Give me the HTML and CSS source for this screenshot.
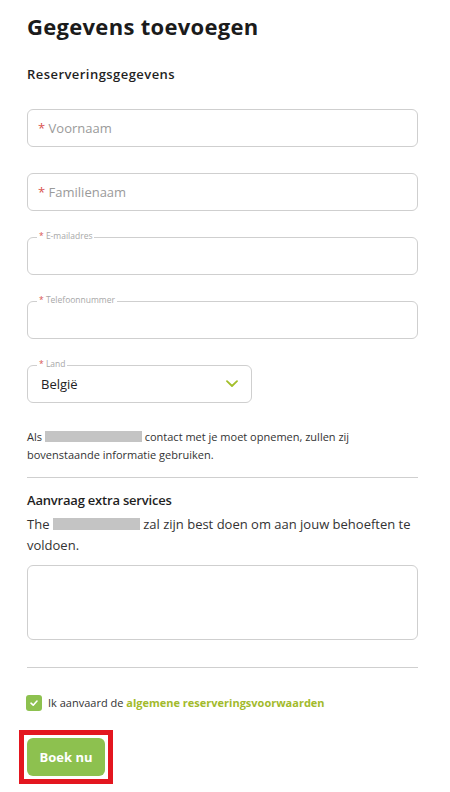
FILE: index.html
```html
<!DOCTYPE html>
<html lang="nl">
<head>
<meta charset="utf-8">
<title>Gegevens toevoegen</title>
<link rel="stylesheet" href="styles.css">
</head>
<body>
<main class="page">
  <h1 class="title">Gegevens toevoegen</h1>
  <h2 class="section-title first">Reserveringsgegevens</h2>

  <div class="fields">
    <div class="field">
      <div class="input"><span class="req">*</span>&nbsp;<span class="ph">Voornaam</span></div>
    </div>
    <div class="field">
      <div class="input"><span class="req">*</span>&nbsp;<span class="ph">Familienaam</span></div>
    </div>
    <div class="field floating">
      <span class="float-label"><span class="req">*</span> E-mailadres</span>
      <div class="input"></div>
    </div>
    <div class="field floating">
      <span class="float-label"><span class="req">*</span> Telefoonnummer</span>
      <div class="input"></div>
    </div>
    <div class="field floating select-field">
      <span class="float-label"><span class="req">*</span> Land</span>
      <div class="input select">
        <span class="value">België</span>
        <svg class="chev" width="12" height="8" viewBox="0 0 12 8"><path d="M1 1.2 L6 6 L11 1.2" fill="none" stroke="#a3bf2a" stroke-width="1.8" stroke-linecap="round" stroke-linejoin="round"/></svg>
      </div>
    </div>
  </div>

  <p class="note">Als <span class="redact r1"></span> contact met je moet opnemen, zullen zij bovenstaande informatie gebruiken.</p>

  <hr class="divider">

  <h2 class="section-title extra">Aanvraag extra services</h2>
  <p class="desc">The <span class="redact r2"></span> zal zijn best doen om aan jouw behoeften te voldoen.</p>
  <div class="textarea"></div>

  <hr class="divider second">

  <label class="terms">
    <span class="check">
      <svg width="10" height="8" viewBox="0 0 10 8"><path d="M2 4.2 L4.2 6.2 L8 2" fill="none" stroke="#fff" stroke-width="1.6" stroke-linecap="round" stroke-linejoin="round"/></svg>
    </span>
    <span class="terms-text">Ik aanvaard de <a class="link">algemene reserveringsvoorwaarden</a></span>
  </label>

  <div class="actions">
    <div class="highlight">
      <button class="btn">Boek nu</button>
    </div>
  </div>
</main>
</body>
</html>
```

FILE: styles.css
```css
* { box-sizing: border-box; }
html, body { margin: 0; padding: 0; background: #fff; }
body {
  font-family: "Open Sans", "DejaVu Sans", sans-serif;
  color: #222;
}
.page {
  width: 450px;
  padding: 10px 32px 0 27px;
}
.title {
  margin: 0;
  font-size: 22px;
  font-weight: 700;
  color: #1b1b1b;
  line-height: 32px;
  letter-spacing: 0.3px;
}
.section-title {
  margin: 0;
  font-size: 13px;
  font-weight: 600;
  color: #1f1f1f;
  line-height: 20px;
}
.section-title.first {
  margin-top: 22px;
  letter-spacing: 0.45px;
}
.fields {
  display: flex;
  flex-direction: column;
  gap: 26.5px;
  margin-top: 25px;
}
.field { position: relative; }
.input {
  height: 37.5px;
  border: 1px solid #cfcfcf;
  border-radius: 6px;
  display: flex;
  align-items: center;
  padding: 0 10px;
  font-size: 13px;
  background: #fff;
}
.req { color: #d9534f; }
.ph { color: #9a9a9a; }
.float-label {
  position: absolute;
  top: -6px;
  left: 10px;
  padding: 0 2px;
  background: #fff;
  font-size: 8.5px;
  line-height: 10px;
  color: #a8a8a8;
  z-index: 1;
}
.select-field { width: 225px; }
.select {
  justify-content: space-between;
  padding: 0 13px;
}
.select .value { color: #222; }
.chev { display: block; }
.note {
  margin: 25px 0 0;
  font-size: 11px;
  line-height: 18px;
  color: #333;
}
.redact {
  display: inline-block;
  background: #c4c4c4;
  height: 11px;
  vertical-align: -1px;
}
.r1 { width: 97px; }
.r2 { width: 87px; height: 12px; }
.divider {
  border: 0;
  border-top: 1px solid #cfcfcf;
  margin: 13px 0 0;
}
.extra {
  margin-top: 12px;
  letter-spacing: -0.2px;
}
.desc {
  margin: 4px 0 0;
  font-size: 13px;
  line-height: 21px;
  color: #333;
}
.textarea {
  margin-top: 9px;
  height: 75px;
  border: 1px solid #cfcfcf;
  border-radius: 6px;
}
.divider.second { margin-top: 27px; }
.terms {
  display: flex;
  align-items: center;
  gap: 6px;
  margin: 27px 0 0 -1px;
  font-size: 11px;
  color: #333;
}
.check {
  width: 16px;
  height: 16px;
  border-radius: 3px;
  background: #8dc14f;
  display: flex;
  align-items: center;
  justify-content: center;
}
.link {
  color: #a2ba2b;
  font-weight: 700;
}
.actions { margin-top: 19px; }
.highlight {
  display: inline-block;
  margin-left: -8px;
  border: 5px solid #e3161f;
  padding: 3px;
}
.btn {
  display: block;
  width: 78px;
  height: 38px;
  border: 0;
  border-radius: 6px;
  background: #8dc14f;
  color: #fff;
  font-family: inherit;
  font-size: 13px;
  font-weight: 700;
  padding: 0;
}
```
